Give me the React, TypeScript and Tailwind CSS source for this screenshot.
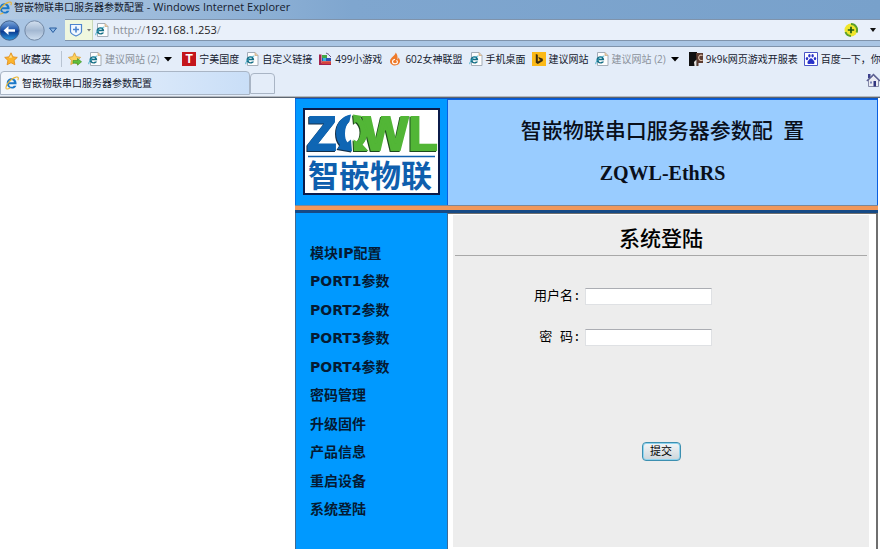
// src/App.tsx

import React from 'react';

const uiFont = "font-['Open_Sans','Noto_Sans_CJK_SC',sans-serif]";

interface IconProps {
  className?: string;
}

const IeGlyph: React.FC<IconProps> = ({ className }) => (
  <svg className={className} viewBox="0 0 16 16" fill="none">
    <path d="M13.200 9.400H4.600c.3 3.300 3.900 3.800 5.400 1.600h3c-2.200 5.400-11 4-11-2.600C2 .6 13.800.6 13.200 9.400zM4.700 7h5.500C9.900 3.900 5.100 3.900 4.700 7z" fill="#1b78c8" />
    <path d="M1.600 14.600C-.5 12 5.600 3.200 13 1.200c2.600-.6 2.600 1.600 1.600 3.600" stroke="#e9b63a" strokeWidth="1.300" />
    <path d="M1.600 14.600c1.200.8 3-.2 4.400-1.200" stroke="#e9b63a" strokeWidth="1.200" />
  </svg>
);

const PageIcon: React.FC<IconProps> = ({ className = 'h-3.5 w-3.5' }) => (
  <svg className={className} viewBox="0 0 14 14" fill="none">
    <path d="M2.500.5h7.500l3 3v10H2.500z" fill="#fdfdfd" stroke="#a3adb8" />
    <path d="M10 .5v3h3" fill="#e7c9a5" stroke="#c7a77f" strokeWidth=".7" />
    <path d="M9.200 8.300H3.600c.2 2.100 2.300 2.300 3.300 1.200h2.100c-1.500 3.300-7.500 2.400-7.500-1.800 0-4.800 8-4.800 7.700.6zM3.700 6.700h3.200c-.2-1.700-2.900-1.700-3.200 0z" fill="#156f86" />
    <path d="M.8 12.200C.2 9.500 5 4.600 9.300 4" stroke="#3da7c4" strokeWidth=".9" />
  </svg>
);

const StarIcon: React.FC = () => (
  <svg className="h-3.5 w-3.5" viewBox="0 0 14 14">
    <path d="M7 .8l1.900 4 4.400.6-3.200 3 .8 4.400L7 10.700l-3.900 2.100.8-4.400-3.200-3 4.400-.6z" fill="#fbb52d" stroke="#e08a1a" strokeWidth=".8" />
    <path d="M7 2.500L8.200 5.500 5 6z" fill="#ffe08a" />
  </svg>
);

const AddStarIcon: React.FC = () => (
  <svg className="h-3.5 w-3.5" viewBox="0 0 14 14">
    <path d="M6.500.8l1.800 3.900 4.200.6-3 3 .7 4.200-3.700-2-3.700 2 .7-4.200-3-3 4.200-.6z" fill="#fdd15c" stroke="#d99a2b" strokeWidth=".8" />
    <path d="M5 8.500h4.500V6.500L13.600 9.800l-4.100 3.400v-2H5z" fill="#5fbf3c" stroke="#3a8f25" strokeWidth=".6" />
  </svg>
);

const TmallIcon: React.FC = () => (
  <span className="flex h-3.5 w-3.5 items-center justify-center bg-[#c4161c] font-['Liberation_Sans',sans-serif] text-xs font-bold text-white">
    T
  </span>
);

const GameIcon: React.FC = () => (
  <svg className="h-3.5 w-3.5" viewBox="0 0 14 14">
    <path d="M1 2.500h2.500v8.500H13v2H1z" fill="#a3224e" />
    <path d="M4 3h5v3H4z" fill="#41a845" />
    <path d="M4 6h9v3H4z" fill="#2c56b5" />
    <path d="M5 6h3v3H5z" fill="#35b7d8" />
    <path d="M3.500 9.200H13V12H3.500z" fill="#d4423c" />
    <path d="M8 1l3 1.500M11 3l2 2" stroke="#6c5a85" strokeWidth="1" />
  </svg>
);

const FlameIcon: React.FC = () => (
  <svg className="h-3.5 w-3.5" viewBox="0 0 14 14" fill="none">
    <path d="M7.500.6C8 3.600 2 5.500 2 9.300c0 2.600 2.300 4.200 5 4.200s5-1.700 5-4.400c0-1.600-.9-2.800-1.700-3.500.1 1-.2 1.700-.8 2C9.800 4.600 9.300 2.200 7.500.6z" fill="#ee7a2b" />
    <path d="M7 7.300c-1.600.3-2.500 1.300-2.500 2.500 0 1.100 1 2 2.400 2s2.500-.8 2.500-1.900c0-.7-.5-1.300-1.100-1.400" stroke="#fff" strokeWidth="1.100" />
  </svg>
);

const BingIcon: React.FC = () => (
  <svg className="h-3.5 w-3.5" viewBox="0 0 14 14">
    <path d="M0 0h14v14H0z" fill="#fbb917" />
    <path d="M3.800 2l2 .8v6.700l2.900-1.600-1.500-.7-.9-2.100 4.500 1.600v2.200l-5 3-2-1.200z" fill="#3a2c10" />
  </svg>
);

const NineKIcon: React.FC = () => (
  <svg className="h-3.5 w-3.5" viewBox="0 0 14 14" fill="none">
    <path d="M0 0h8v14H0z" fill="#111" />
    <path d="M7 1h7v10H9.500v3H8z" fill="#5c3c30" />
    <path d="M13.500 3.500C11 2.500 9.500 4 9.700 6s2 3 4 2.200" stroke="#e2c4ae" strokeWidth="1.100" />
    <path d="M5 10l2.500-2.500V14H5.500z" fill="#e9e4e0" />
  </svg>
);

const BaiduIcon: React.FC = () => (
  <svg className="h-3.5 w-3.5" viewBox="0 0 14 14">
    <path d="M.5.5h13v13H.5z" fill="#fff" stroke="#4a55c8" />
    <g fill="#2932c9">
      <ellipse cx="3" cy="6.600" rx="1.200" ry="1.600" />
      <ellipse cx="5.400" cy="3.800" rx="1.200" ry="1.700" />
      <ellipse cx="8.600" cy="3.800" rx="1.200" ry="1.700" />
      <ellipse cx="11" cy="6.600" rx="1.200" ry="1.600" />
      <path d="M7 6.200c1.200 0 1.600 1.200 2.600 2.200 1.200 1.100 1.500 3.600-.6 3.700-.8 0-1.300-.3-2-.3s-1.200.3-2 .3c-2.100-.1-1.800-2.600-.6-3.700 1-1 1.400-2.200 2.600-2.200z" />
    </g>
  </svg>
);

const HomeIcon: React.FC = () => (
  <svg className="h-3.5 w-3.5 shrink-0" viewBox="0 0 14 14">
    <path d="M2 1h2.500v4H2z" fill="#3b3f8c" />
    <path d="M2.500 7L7.500 2.500 12.500 7v6.500h-10z" fill="#e9eaf3" stroke="#6d7196" strokeWidth=".8" />
    <path d="M.8 8L7.500 1.500 14 8" fill="none" stroke="#5b5f92" strokeWidth="1.300" />
    <path d="M7.500 8H10v5.500H7.500z" fill="#30357f" />
    <path d="M4 8.500h2v2H4z" fill="#7b86b8" />
  </svg>
);

const Caret: React.FC = () => (
  <svg className="h-2 w-2 shrink-0" viewBox="0 0 8 8" fill="#000">
    <path d="M0 2h8L4 6.500z" />
  </svg>
);

interface Favorite {
  icon: React.ReactNode;
  label: string;
  menu?: boolean;
}

const favorites: Favorite[] = [
  { icon: <PageIcon />, label: '建议网站 (2)', menu: true },
  { icon: <TmallIcon />, label: '宁美国度' },
  { icon: <PageIcon />, label: '自定义链接' },
  { icon: <GameIcon />, label: '499小游戏' },
  { icon: <FlameIcon />, label: '602女神联盟' },
  { icon: <PageIcon />, label: '手机桌面' },
  { icon: <BingIcon />, label: '建议网站' },
  { icon: <PageIcon />, label: '建议网站 (2)', menu: true },
  { icon: <NineKIcon />, label: '9k9k网页游戏开服表' },
  { icon: <BaiduIcon />, label: '百度一下，你' }
];

const menuItems = [
  '模块IP配置',
  'PORT1参数',
  'PORT2参数',
  'PORT3参数',
  'PORT4参数',
  '密码管理',
  '升级固件',
  '产品信息',
  '重启设备',
  '系统登陆'
];

const AddressRow: React.FC = () => (
  <div className="flex h-[27px] items-start bg-[#a9c5e4]">
    <div className="flex h-[22px] w-[65px] shrink-0 items-center">
      <button aria-label="Back" className="-ml-px h-[21px] w-[21px] shrink-0">
        <svg viewBox="0 0 21 21">
          <defs>
            <linearGradient id="back" x1="0" y1="0" x2="0" y2="1">
              <stop offset="0" stopColor="#7ea9dc" />
              <stop offset=".45" stopColor="#2359ad" />
              <stop offset=".55" stopColor="#0b3c92" />
              <stop offset="1" stopColor="#2f9be0" />
            </linearGradient>
          </defs>
          <circle cx="10.500" cy="10.500" r="9.700" fill="url(#back)" stroke="#41618c" />
          <path d="M4.500 10.500l5-4.500v3.200h6.500v2.600H9.500V15z" fill="#fff" />
        </svg>
      </button>
      <button aria-label="Forward" className="ml-1 h-[21px] w-[21px] shrink-0">
        <svg viewBox="0 0 21 21">
          <defs>
            <linearGradient id="forward" x1="0" y1="0" x2="0" y2="1">
              <stop offset="0" stopColor="#d3e0ef" />
              <stop offset=".5" stopColor="#a3b8d2" />
              <stop offset="1" stopColor="#cfdff0" />
            </linearGradient>
          </defs>
          <circle cx="10.500" cy="10.500" r="9.700" fill="url(#forward)" stroke="#7389a5" />
        </svg>
      </button>
      <svg className="ml-1 h-2 w-2" viewBox="0 0 8 8">
        <path d="M.5 2h7L4 6.500z" fill="#8db8e6" stroke="#285c9e" />
      </svg>
    </div>
    <div className="flex h-[22px] flex-1 items-center border-y border-[#7f93ab] bg-[#e9f0fa]">
      <div className="flex h-5 w-7 shrink-0 items-center gap-1 border-r border-[#c9d8b8] bg-[#eff7df] pl-1">
        <svg className="h-3.5 w-3.5" viewBox="0 0 14 14" fill="none">
          <path d="M1.500 1.500h11v7c0 2-3 3.500-5.500 4.500-2.500-1-5.500-2.500-5.500-4.500z" fill="#f2f8ff" stroke="#4c84cf" strokeWidth="1.200" />
          <path d="M7 3.500v6M4 6.500h6" stroke="#4c84cf" strokeWidth="1.600" />
        </svg>
        <svg className="h-1 w-1" viewBox="0 0 4 4">
          <path d="M0 1h4L2 3.500z" fill="#777" />
        </svg>
      </div>
      <PageIcon className="ml-0.5 h-3.5 w-3.5 shrink-0" />
      <div className="ml-1 flex-1 text-[11px] text-[#8a8f96]">
        http://<span className="text-[#222]">192.168.1.253</span>/
      </div>
      <svg className="h-3.5 w-3.5" viewBox="0 0 14 14" fill="none">
        <circle cx="7" cy="7" r="6.500" fill="#f0e62c" />
        <path d="M7 1a6 6 0 0 1 5.500 8.500M7 13a6 6 0 0 1-5.500-4" stroke="#5aa02c" strokeWidth="2" />
        <path d="M7 3.800v6.400M3.800 7h6.400" stroke="#1f5a14" strokeWidth="1.700" />
      </svg>
      <svg className="mr-1 ml-3 h-1.5 w-1.5" viewBox="0 0 6 6">
        <path d="M0 1h6L3 5z" fill="#111" />
      </svg>
    </div>
  </div>
);

const BrowserChrome: React.FC = () => (
  <header className={`${uiFont} text-[10px] text-[#15202e]`}>
    <div className="flex h-[19px] items-center overflow-hidden bg-linear-to-r from-[#b3cbe4] via-[#7fa6cf] via-40% to-[#78a1cb] pb-1 whitespace-pre">
      <IeGlyph className="-ml-0.5 h-3.5 w-3.5 shrink-0" />
      <span className="ml-0.5">智嵌物联串口服务器参数配置</span>
      <span className="text-[11px]"> - Windows Internet Explorer</span>
    </div>
    <AddressRow />
    <div className="border-t border-[#7f93ab] bg-[#e4edf9]">
      <nav className="flex h-6 items-center overflow-hidden pl-1 whitespace-nowrap">
        <button className="flex shrink-0 items-center gap-[3px]">
          <StarIcon />
          收藏夹
        </button>
        <span className="mx-[10px] h-4 w-px shrink-0 bg-[#b9c4d2]" />
        <button aria-label="Add to favorites" className="mr-1.5 ml-[-4px] shrink-0">
          <AddStarIcon />
        </button>
        {favorites.map((fav, index) =>
          fav.menu ? (
            <a key={index} href="#" className="mr-2.5 flex shrink-0 items-center gap-[3px]">
              {fav.icon}
              <span className="mr-0.5 text-[#8b929b]">{fav.label}</span>
              <Caret />
            </a>
          ) : (
            <a key={index} href="#" className="mr-1.5 flex shrink-0 items-center gap-[3px]">
              {fav.icon}
              {fav.label}
            </a>
          )
        )}
      </nav>
      <div className="flex h-[25px] items-start">
        <div className="flex h-6 w-[250px] items-center gap-[3px] rounded-t-sm border border-[#a9b5c5] bg-linear-to-r from-[#f2f7fd] to-[#c9def7] pl-1">
          <IeGlyph className="h-3.5 w-3.5" />
          智嵌物联串口服务器参数配置
        </div>
        <button aria-label="New tab" className="mt-0.5 h-[21px] w-[25px] rounded-t-sm border border-[#a9b5c5]" />
        <div className="mt-0.5 ml-auto">
          <HomeIcon />
        </div>
      </div>
    </div>
    <div className="h-0.5 border-t border-[#b4b9c0] bg-[#5e6670]" />
  </header>
);

const Logo: React.FC = () => (
  <div className="h-[87px] w-[137px] border-2 border-[#0b1b4a] bg-white">
    <svg className="h-full w-full overflow-visible" viewBox="2 2 133 83">
      <g className="drop-shadow-[-1px_1px_0_#14304a]">
        <text x="4" y="42" fill="#0f66b4" stroke="#0f66b4" strokeWidth="2" fontFamily="Liberation Sans" fontWeight="bold" fontSize="48">Z</text>
        <path d="M48 6.500C39 8 33 15 33 25c0 5 1.500 9 4 12l-2.500 4L49 43.500l-1-12-3.500 3C42.500 32 42 29 42 25.500c0-5.500 1.500-9.500 4.500-12z" fill="#0f66b4" />
      </g>
      <g className="drop-shadow-[-1px_1px_0_#1d4a1c]" fill="#52b636">
        <path d="M50 6.500l9 1.500-1.500 2.500C62 13.500 64.500 18 64.500 24c0 5-2 9.500-5 12.500l6 6.500H51l-.5-11.500 3.500 2c2.500-3 3.500-6 3.500-10 0-4.500-2-8-4.500-9.500l-2 2z" />
        <text x="60" y="42" stroke="#52b636" strokeWidth="2" fontFamily="Liberation Sans" fontWeight="bold" fontSize="48">WL</text>
      </g>
      <path d="M5 48.500h127" stroke="#0f5fae" strokeWidth="1.500" />
      <text x="5" y="79" fill="#0f5fae" fontFamily="Noto Sans CJK SC" fontWeight="bold" fontSize="31">智嵌物联</text>
    </svg>
  </div>
);

const LoginForm: React.FC = () => (
  <form
    onSubmit={(e) => e.preventDefault()}
    className="flex flex-col items-center font-['Liberation_Mono','Noto_Sans_CJK_SC',monospace] text-[13px] text-black"
  >
    <div className="mt-8 grid grid-cols-[auto_auto] items-center gap-x-1 gap-y-6 pr-[76px]">
      <label htmlFor="user" className="text-right leading-[17px]">用户名:</label>
      <input id="user" type="text" className="h-[17px] w-[127px] border border-[#dfe1e4] border-t-[#abadb3] bg-white px-0.5 text-xs" />
      <label htmlFor="password" className="text-right leading-[17px]">密 码:</label>
      <input id="password" type="password" className="h-[17px] w-[127px] border border-[#dfe1e4] border-t-[#abadb3] bg-white px-0.5 text-xs" />
    </div>
    <button
      type="submit"
      className="mt-24 h-[19px] w-[39px] rounded-sm border border-[#3c8fb0] bg-linear-to-b from-[#f3f6f8] to-[#ccd5da] text-[11px] leading-4 ring-1 ring-[#8fd3ee] ring-inset"
    >
      提交
    </button>
  </form>
);

export default function App() {
  return (
    <div className="min-h-screen overflow-hidden bg-white">
      <BrowserChrome />
      <div className="mr-0.5 ml-[295px] border-t border-[#0a57c9]">
        <div className="flex h-[106px]">
          <div className="w-[152px] shrink-0 border-l border-[#0a6fe0] bg-[#0099ff] pt-[9px] pl-[7px]">
            <Logo />
          </div>
          <div className="flex-1 border-x border-t border-[#0a5fe0] bg-[#99ccff] pt-[17px] text-center font-['Liberation_Serif','Noto_Sans_CJK_SC',serif] font-bold text-[#0a0f1a]">
            <h1 className="text-[21px] leading-[28px] font-medium">智嵌物联串口服务器参数配&nbsp;&nbsp;置</h1>
            <h2 className="mt-3.5 text-xl leading-[28px]">ZQWL-EthRS</h2>
          </div>
        </div>
        <div className="h-[5px] border-t border-[#7c8796] bg-[#f0975a]" />
        <div className="h-[3px] bg-[#164a86]" />
        <div className="flex h-[336px]">
          <nav className="w-[153px] shrink-0 border-x border-[#3f6a94] bg-[#0099ff] pt-[30px] pl-[14px]">
            <ul className="flex h-[276px] flex-col justify-between font-['DejaVu_Sans','Noto_Sans_CJK_SC',sans-serif] text-sm font-bold text-[#051a33]">
              {menuItems.map((item) => (
                <li key={item} className="h-5 leading-5">
                  <a href="#">{item}</a>
                </li>
              ))}
            </ul>
          </nav>
          <main className="flex-1 border-t border-r-2 border-[#6f6f6f] bg-white pt-px pr-[7px] pb-0.5 pl-[5px]">
            <div className="h-full bg-[#ededed] px-0.5 pt-2.5">
              <h3 className="mb-1.5 text-center font-['Noto_Sans_CJK_SC',sans-serif] text-[21px] leading-6 font-medium text-black">系统登陆</h3>
              <hr className="border-[#a8a8a8]" />
              <LoginForm />
            </div>
          </main>
        </div>
      </div>
    </div>
  );
}
